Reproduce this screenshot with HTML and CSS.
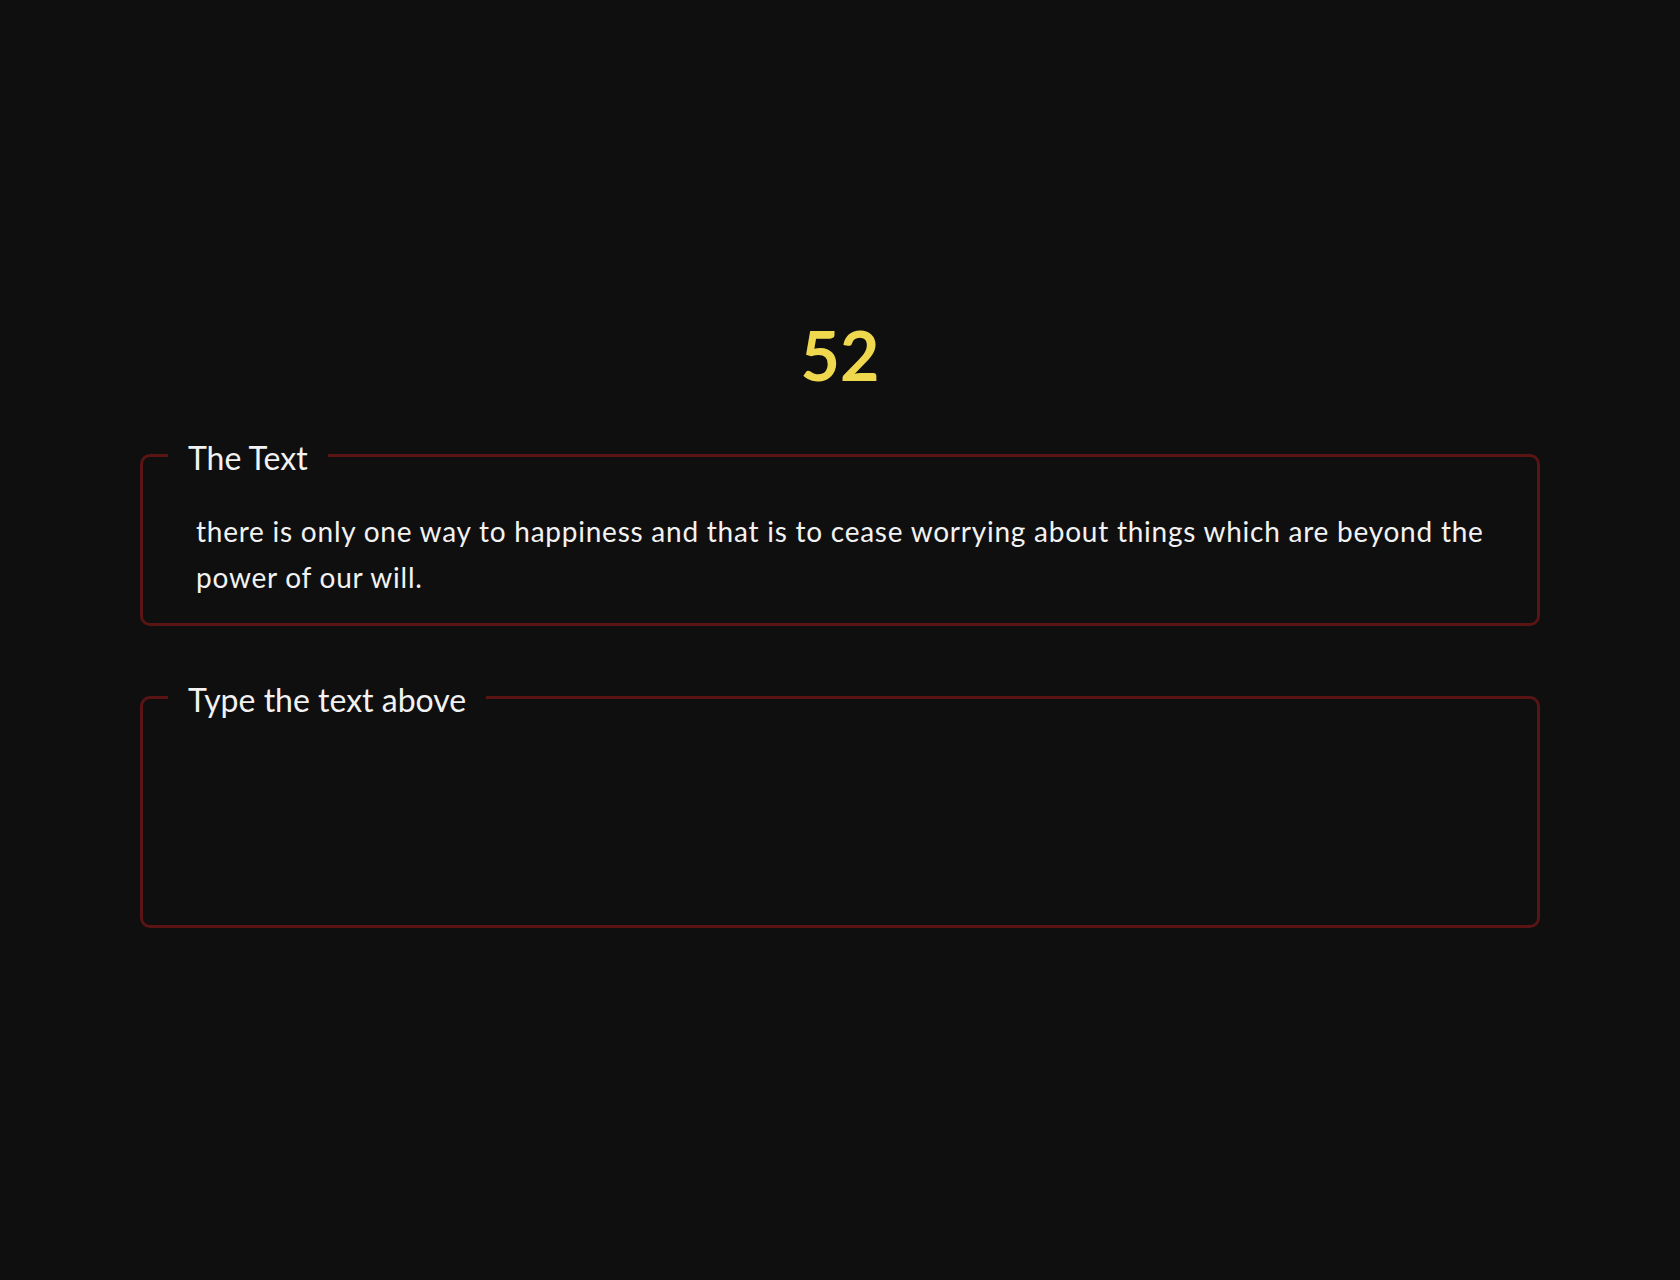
FILE: index.html
```html
<!DOCTYPE html>
<html lang="en">
<head>
<meta charset="utf-8">
<title>Typing</title>
<link rel="stylesheet" href="styles.css">
</head>
<body>
<main class="page">
  <div class="score">52</div>
  <fieldset class="box box-text">
    <legend class="box-legend">The Text</legend>
    <p class="quote">there is only one way to happiness and that is to cease worrying about things which are beyond the power of our will.</p>
  </fieldset>
  <fieldset class="box box-input">
    <legend class="box-legend">Type the text above</legend>
    <textarea class="typing" spellcheck="false"></textarea>
  </fieldset>
</main>
</body>
</html>
```

FILE: styles.css
```css
html, body {
  margin: 0;
  padding: 0;
  background: #0f0f0f;
}
body {
  font-family: Lato, "Open Sans", sans-serif;
  color: #f2f2f2;
}
.page {
  width: 1400px;
  margin: 0 auto;
  padding-top: 321px;
  display: flex;
  flex-direction: column;
}
.score {
  text-align: center;
  font-size: 68px;
  line-height: 1;
  font-weight: 700;
  color: #f0d84e;
  height: 113px;
}
.box {
  margin: 0;
  border: 3px solid #5a1414;
  border-radius: 10px;
  padding: 0 25px;
  min-width: 0;
}
.box-legend {
  font-size: 32px;
  padding: 4px 20px 0;
  color: #f2f2f2;
}
.quote {
  margin: 31px 0 0;
  padding: 0 0 23px 28px;
  font-size: 28px;
  line-height: 46px;
  letter-spacing: 0.76px;
}
.box-input {
  margin-top: 50px;
}
.typing {
  display: block;
  width: 100%;
  height: 206px;
  box-sizing: border-box;
  background: transparent;
  border: none;
  outline: none;
  resize: none;
  color: #f2f2f2;
  font-family: inherit;
  font-size: 28px;
}
```
